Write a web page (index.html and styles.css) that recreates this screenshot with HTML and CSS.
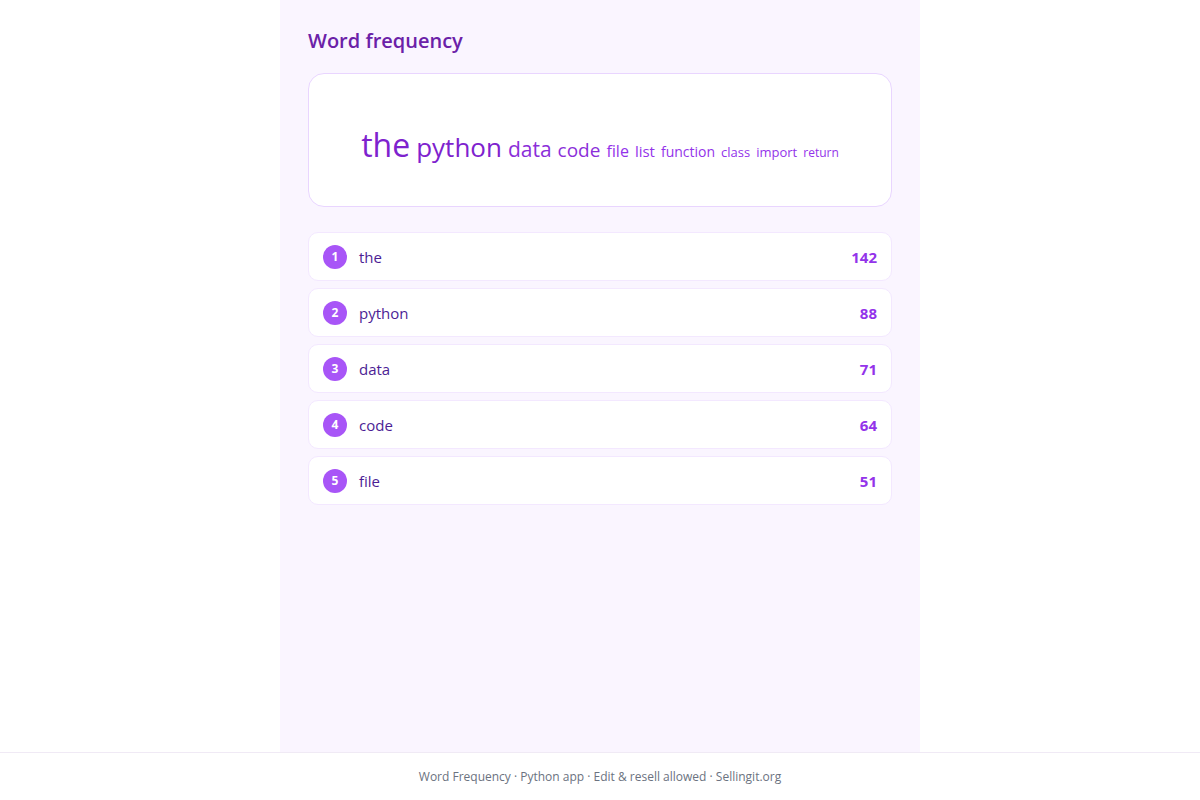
FILE: index.html
```html
<html lang="en">
<head>
    <meta charset="UTF-8">
    <meta name="viewport" content="width=device-width, initial-scale=1.0">
    <title>Word Frequency</title>
    <link rel="stylesheet" href="styles.css">
</head>
<body>
    <main class="app">
        <h1 class="title">Word frequency</h1>

        <div class="cloud">
            <span class="word w1">the</span>
            <span class="word w2">python</span>
            <span class="word w3">data</span>
            <span class="word w4">code</span>
            <span class="word w5">file</span>
            <span class="word w6">list</span>
            <span class="word w7">function</span>
            <span class="word w8">class</span>
            <span class="word w9">import</span>
            <span class="word w10">return</span>
        </div>

        <ul class="top-list">
            <li class="row">
                <span class="rank">1</span>
                <span class="row-word">the</span>
                <span class="count">142</span>
            </li>
            <li class="row">
                <span class="rank">2</span>
                <span class="row-word">python</span>
                <span class="count">88</span>
            </li>
            <li class="row">
                <span class="rank">3</span>
                <span class="row-word">data</span>
                <span class="count">71</span>
            </li>
            <li class="row">
                <span class="rank">4</span>
                <span class="row-word">code</span>
                <span class="count">64</span>
            </li>
            <li class="row">
                <span class="rank">5</span>
                <span class="row-word">file</span>
                <span class="count">51</span>
            </li>
        </ul>
    </main>

    <footer class="footer">
        Word Frequency · Python app · Edit &amp; resell allowed · Sellingit.org
    </footer>
</body>
</html>
```

FILE: styles.css
```css
* {
    margin: 0;
    padding: 0;
    box-sizing: border-box;
}

body {
    font-family: "Segoe UI", "Open Sans", "Noto Sans", sans-serif;
    background-color: #ffffff;
    color: #3b0764;
}

.app {
    width: 640px;
    min-height: 752px;
    margin: 0 auto;
    padding: 29px 28px 24px;
    background-color: #faf5ff;
}

.title {
    font-size: 20px;
    line-height: 24px;
    font-weight: 600;
    color: #6b21a8;
    margin-bottom: 20px;
}

.cloud {
    height: 134px;
    display: flex;
    flex-wrap: wrap;
    justify-content: center;
    align-items: baseline;
    align-content: center;
    gap: 4px 6px;
    padding: 10px 24px 0;
    background: #ffffff;
    border: 1px solid #e9d5ff;
    border-radius: 16px;
    margin-bottom: 25px;
}

.word {
    color: #9333ea;
    line-height: 1.2;
}

.w1 { font-size: 32px; color: #7e22ce; }
.w2 { font-size: 26px; color: #7e22ce; }
.w3 { font-size: 21px; color: #8b2fd9; }
.w4 { font-size: 19px; color: #8b2fd9; }
.w5 { font-size: 16px; }
.w6 { font-size: 15px; }
.w7 { font-size: 14px; }
.w8 { font-size: 13px; }
.w9 { font-size: 13px; }
.w10 { font-size: 12px; }

.top-list {
    list-style: none;
    display: flex;
    flex-direction: column;
    gap: 7px;
}

.row {
    height: 49px;
    display: flex;
    align-items: center;
    gap: 12px;
    padding: 0 14px;
    background: #ffffff;
    border: 1px solid #f3e8ff;
    border-radius: 10px;
}

.rank {
    width: 24px;
    height: 24px;
    border-radius: 50%;
    background: #a855f7;
    color: #ffffff;
    font-size: 12px;
    font-weight: 700;
    display: flex;
    justify-content: center;
    align-items: center;
}

.row-word {
    flex: 1;
    font-size: 15px;
    color: #4c1d95;
}

.count {
    font-size: 15px;
    font-weight: 700;
    color: #9333ea;
}

.footer {
    height: 48px;
    display: flex;
    justify-content: center;
    align-items: center;
    border-top: 1px solid #f0eaf5;
    font-size: 12px;
    color: #6b7280;
}
```
